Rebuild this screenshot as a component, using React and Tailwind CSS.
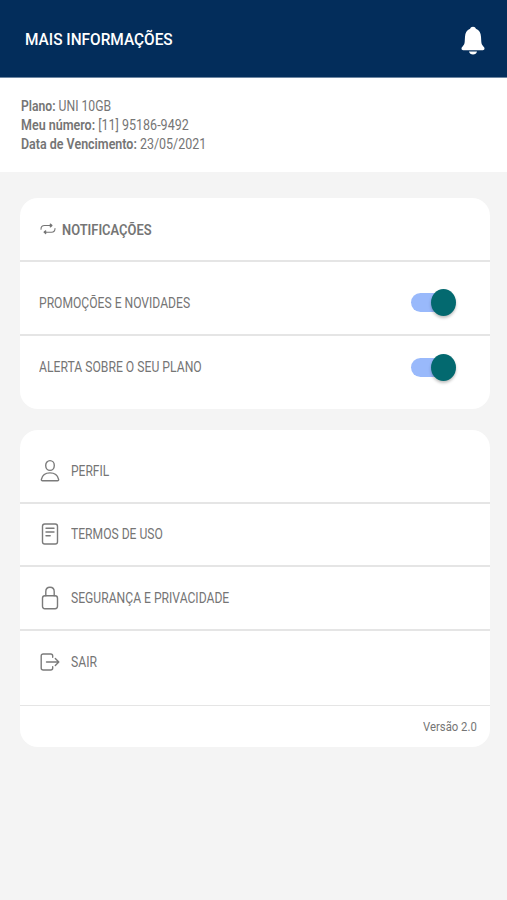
import React from 'react';

const BellIcon = () => (
  <svg width="24" height="30" viewBox="0 0 24 30" fill="white" aria-hidden="true">
    <path d="M12 .8c1.500 0 2.600.8 2.900 2 3.400 1.300 4.900 4.300 5.100 8l.3 5c.1 2.200.9 3.500 2.300 4.900.6.600.9 1.100.9 1.900 0 1-.7 1.600-1.700 1.600H2.200c-1 0-1.700-.6-1.700-1.600 0-.8.3-1.300.9-1.900 1.400-1.400 2.200-2.700 2.300-4.900l.3-5c.2-3.700 1.700-6.700 5.100-8C9.400 1.600 10.500.8 12 .8z" />
    <path d="M8 25.500h8c-.4 1.900-1.900 3-4 3s-3.600-1.100-4-3z" />
  </svg>
);

const RepeatIcon = () => (
  <svg width="16" height="12" viewBox="0 0 16 12" fill="none" stroke="#757575" strokeWidth="1.1" strokeLinecap="round" strokeLinejoin="round" aria-hidden="true">
    <path d="M1 6.200C1 3.600 2.200 2.500 4.500 2.500h6.700" />
    <path d="M10.300 1l1.700 1.500-1.700 1.500z" fill="#757575" />
    <path d="M15 5.500c0 2.600-1.200 3.700-3.500 3.700H4.800" />
    <path d="M5.700 7.700L4 9.200l1.700 1.500z" fill="#757575" />
  </svg>
);

const LineIcon = ({ children }) => (
  <svg width="20" height="24" viewBox="0 0 20 24" fill="none" stroke="#7b7b7b" strokeWidth="1.400" strokeLinecap="round" strokeLinejoin="round" className="shrink-0" aria-hidden="true">
    {children}
  </svg>
);

const UserIcon = () => (
  <LineIcon>
    <ellipse cx="10" cy="6.500" rx="4.300" ry="4.900" />
    <path d="M2.500 21.700h15c.9 0 1.300-.6 1.100-1.400C17.700 16.400 14.500 13.900 10 13.900s-7.700 2.500-8.600 6.400c-.2.8.2 1.400 1.100 1.400z" />
  </LineIcon>
);

const DocumentIcon = () => (
  <LineIcon>
    <rect x="2.500" y="2" width="15" height="20" rx="2.200" />
    <path d="M6 6.200h8M6 10h8M6 13.800h4.200" />
  </LineIcon>
);

const LockIcon = () => (
  <LineIcon>
    <rect x="2.500" y="9.800" width="15" height="12.900" rx="2.400" />
    <path d="M5.800 9.800V5.600c0-2.600 1.700-4.300 4.200-4.300s4.200 1.700 4.200 4.300v4.200" />
  </LineIcon>
);

const LogoutIcon = () => (
  <LineIcon>
    <path d="M12.700 7.300V6c0-1.300-.8-2-2-2H3.200c-1.300 0-2 .8-2 2v12c0 1.300.8 2 2 2h7.500c1.300 0 2-.8 2-2v-1.300" />
    <path d="M6.500 12h12M15.300 8.500l3.500 3.500-3.500 3.500" />
  </LineIcon>
);

const Switch = ({ label }) => (
  <button type="button" role="switch" aria-checked="true" aria-label={label} className="w-[45px] h-[27px] flex items-center">
    <span className="w-[34px] h-[19px] rounded-full bg-[#99b9fb]" />
    <span className="-ml-[14px] w-[25px] h-[27px] shrink-0 rounded-[50%] bg-[#03696f] shadow-[0_2px_3px_rgba(0,0,0,0.25)]" />
  </button>
);

const info = [
  { label: 'Plano:', value: 'UNI 10GB', fit: 'scale-x-[0.87]' },
  { label: 'Meu número:', value: '[11] 95186-9492', fit: 'scale-x-[0.893]' },
  { label: 'Data de Vencimento:', value: '23/05/2021', fit: 'scale-x-[0.89]' },
];

const menu = [
  { label: 'PERFIL', icon: UserIcon, row: 'h-[74px] pt-[9px] border-b-2', fit: 'scale-x-[0.86]' },
  { label: 'TERMOS DE USO', icon: DocumentIcon, row: 'h-[63px] pb-[2px] border-b-2', fit: 'scale-x-[0.865]' },
  { label: 'SEGURANÇA E PRIVACIDADE', icon: LockIcon, row: 'h-16 border-b-2', fit: 'scale-x-[0.866]' },
  { label: 'SAIR', icon: LogoutIcon, row: 'h-[75px] pb-[13px] border-b', fit: 'scale-x-[0.87]' },
];

const App = () => (
  <div className="w-full min-h-screen bg-[#f4f4f4] font-['Roboto',sans-serif] text-[#757575] text-sm">
    <header className="h-[78px] bg-[#032d5b] border-b border-[#6d86a2] flex items-center justify-between pl-[25px] pr-[22px]">
      <h1 className="pt-px text-[17px] font-medium text-white origin-left scale-x-[0.905] whitespace-nowrap">MAIS INFORMAÇÕES</h1>
      <button type="button" aria-label="Notificações" className="pt-1">
        <BellIcon />
      </button>
    </header>

    <section className="h-[94px] bg-white pl-[20.500px] pt-[19px]">
      {info.map(({ label, value, fit }) => (
        <p key={label} className={`w-fit leading-[19px] whitespace-nowrap origin-left ${fit}`}>
          <b className="font-semibold">{label}</b> {value}
        </p>
      ))}
    </section>

    <main className="px-5 pt-[26px] pr-[17px] space-y-[21px]">
      <section className="h-[211px] bg-white rounded-[18px]">
        <div className="h-16 pl-5 flex items-center gap-[6px] border-b-2 border-[#e5e5e5]">
          <RepeatIcon />
          <h2 className="pt-[4px] text-[14.500px] font-semibold origin-left scale-x-[0.89] whitespace-nowrap">NOTIFICAÇÕES</h2>
        </div>
        <div className="h-[74px] pt-[9px] pl-[19px] pr-[34.500px] flex items-center justify-between border-b-2 border-[#e5e5e5]">
          <span className="pt-px origin-left scale-x-[0.865] whitespace-nowrap">PROMOÇÕES E NOVIDADES</span>
          <Switch label="Promoções e novidades" />
        </div>
        <div className="h-[62px] pl-[19px] pr-[34.500px] flex items-center justify-between">
          <span className="origin-left scale-x-[0.87] whitespace-nowrap">ALERTA SOBRE O SEU PLANO</span>
          <Switch label="Alerta sobre o seu plano" />
        </div>
      </section>

      <section className="h-[317px] bg-white rounded-[18px]">
        {menu.map(({ label, icon: Icon, row, fit }) => (
          <div key={label} className={`pl-5 flex items-center gap-[11px] border-[#e5e5e5] ${row}`}>
            <Icon />
            <span className={`origin-left whitespace-nowrap ${fit}`}>{label}</span>
          </div>
        ))}
        <div className="h-[41px] pt-px pr-[13px] flex items-center justify-end">
          <span className="text-[13px] origin-right scale-x-[0.87]">Versão 2.0</span>
        </div>
      </section>
    </main>
  </div>
);

export default App;
